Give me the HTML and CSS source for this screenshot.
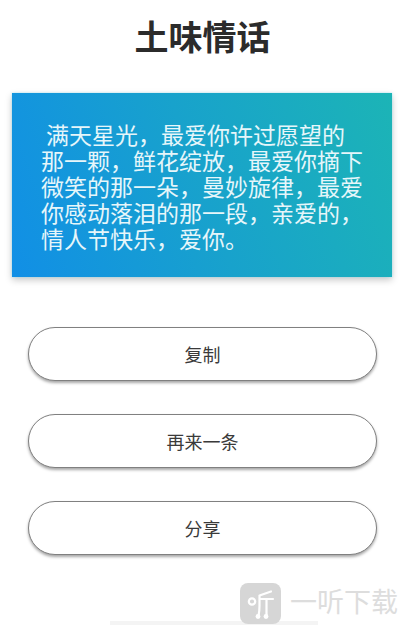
FILE: index.html
```html
<!DOCTYPE html>
<html lang="zh-CN">
<head>
    <meta charset="UTF-8">
    <title>土味情话</title>
    <link rel="stylesheet" href="styles.css">
</head>
<body>
    <div class="page">
        <h1 class="title">土味情话</h1>

        <div class="quote-card">
            <p class="quote-text">满天星光，最爱你许过愿望的那一颗，鲜花绽放，最爱你摘下微笑的那一朵，曼妙旋律，最爱你感动落泪的那一段，亲爱的，情人节快乐，爱你。</p>
        </div>

        <div class="actions">
            <button class="action-btn" type="button">复制</button>
            <button class="action-btn" type="button">再来一条</button>
            <button class="action-btn" type="button">分享</button>
        </div>

        <div class="home-bar"></div>
    </div>

    <!-- watermark sits over the page corner -->
    <div class="watermark">
        <span class="watermark-icon">
            <svg viewBox="0 0 41 41" width="41" height="41" aria-hidden="true">
                <circle cx="12" cy="18.5" r="3.2" fill="none" stroke="#fff" stroke-width="2.2"></circle>
                <path d="M19.5 12.5L31 8.5M19.5 12.5V23C19.5 27 19.2 29.5 18.5 33M20 16H33M26.5 16V33" fill="none" stroke="#fff" stroke-width="2.2" stroke-linecap="round"></path>
                <circle cx="18" cy="33.5" r="2.4" fill="#fff"></circle>
                <circle cx="26" cy="33.5" r="2.4" fill="#fff"></circle>
            </svg>
        </span>
        <span class="watermark-text">一听下载</span>
    </div>
</body>
</html>
```

FILE: styles.css
```css
* {
    box-sizing: border-box;
}

body {
    margin: 0;
    height: 625px;
    overflow: hidden;
    position: relative;
    background-color: #ffffff;
    font-family: "Liberation Sans", "Noto Sans CJK SC", sans-serif;
}

.page {
    display: flex;
    flex-direction: column;
    height: 625px;
    padding-top: 16px;
}

.title {
    margin: 0 0 0 5px;
    height: 77px;
    font-size: 34px;
    line-height: 44px;
    font-weight: bold;
    text-align: center;
    color: #2b2b2b;
}

.quote-card {
    margin: 0 8px 0 12px;
    height: 184px;
    padding: 30px 28px 0 29px;
    background: linear-gradient(70deg, #118fe6 0%, #18a2cc 50%, #1cb4b6 100%);
    box-shadow: 0 0 2px rgba(120, 220, 240, 0.6), 0 3px 7px rgba(0, 0, 0, 0.22);
}

.quote-text {
    margin: 0;
    font-size: 23px;
    line-height: 26px;
    text-indent: 5px;
    color: #e6f6fa;
}

.actions {
    display: flex;
    flex-direction: column;
    gap: 33px;
    margin: 50px 23px 0 28px;
}

.action-btn {
    height: 54px;
    padding: 0;
    border: 1px solid #808080;
    border-radius: 27px;
    background-color: #ffffff;
    box-shadow: 0 2px 3px rgba(0, 0, 0, 0.35);
    font-family: inherit;
    font-size: 18px;
    color: #3a3a3a;
}

.home-bar {
    width: 208px;
    height: 4px;
    margin: 66px 0 0 110px;
    background-color: #f4f4f4;
}

.watermark {
    position: absolute;
    left: 240px;
    top: 583px;
    display: flex;
    align-items: center;
    gap: 9px;
}

.watermark-icon {
    display: flex;
    width: 41px;
    height: 41px;
    border-radius: 8px;
    background-color: #d6d6d6;
}

.watermark-text {
    font-size: 27px;
    line-height: 41px;
    color: #dddddd;
}
```
